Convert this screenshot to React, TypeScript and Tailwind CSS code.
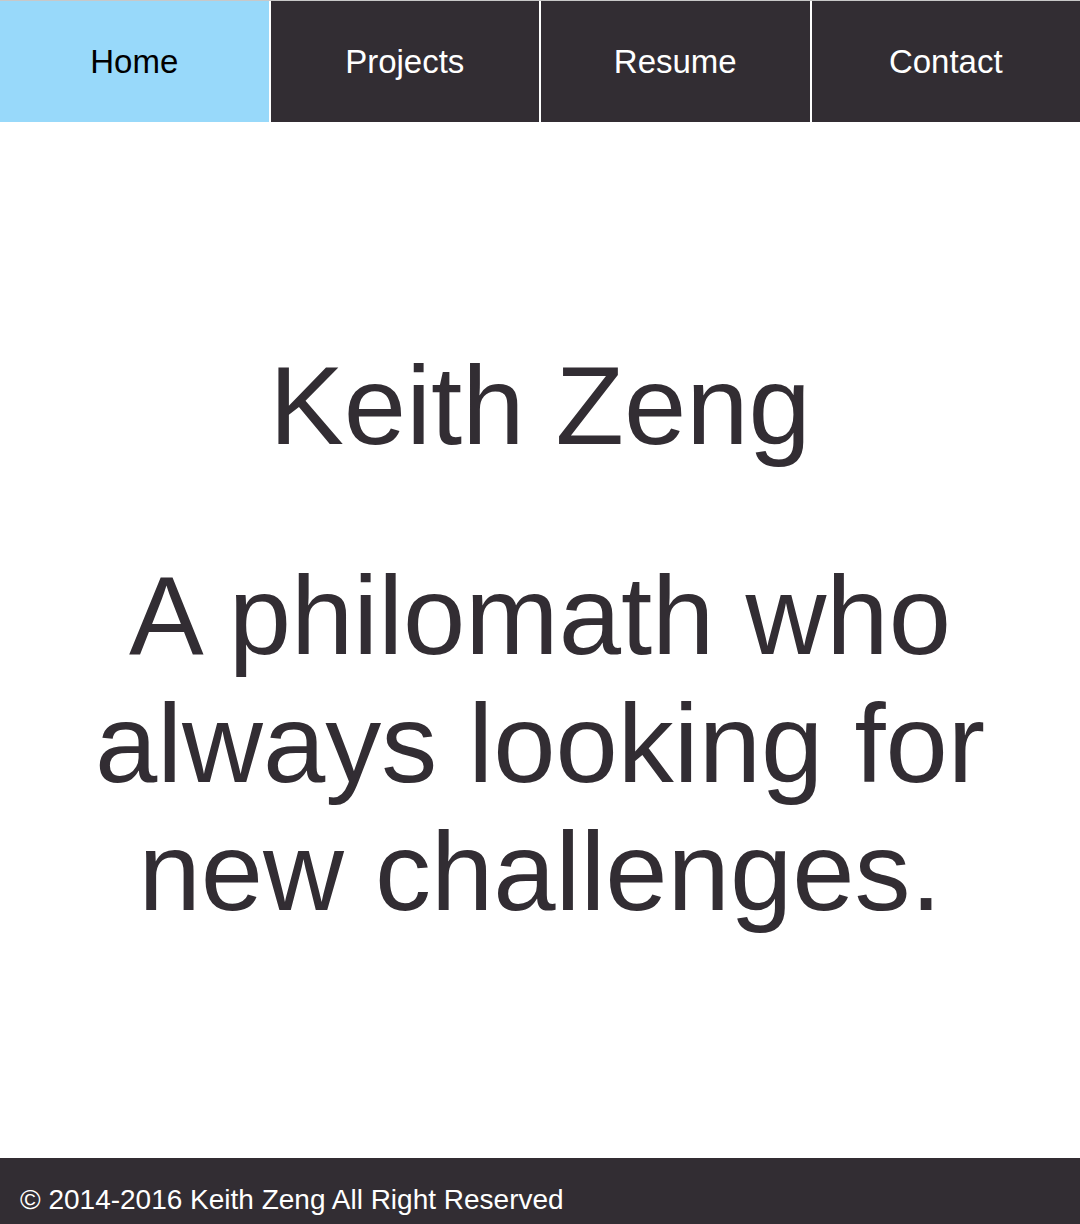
import React from 'react';

const links = ['Home', 'Projects', 'Resume', 'Contact'];

export default function App() {
  return (
    <div className="min-h-screen bg-white font-['Liberation_Sans',Arial,sans-serif] text-[#322d33]">
      <nav className="grid grid-cols-4 gap-[2px] border-t border-[#c8c8c8] bg-white">
        {links.map((l, i) => (
          <a
            key={l}
            href="#"
            className={`flex h-[121px] items-center justify-center text-[33px] leading-none ${
              i === 0 ? 'bg-[#98d9fa] text-black' : 'bg-[#322d33] text-white'
            }`}
          >
            {l}
          </a>
        ))}
      </nav>

      <main className="px-4 pt-[220px] text-center">
        <h1 className="text-[112px] font-normal leading-[128px]">Keith Zeng</h1>
        <p className="mt-[82px] text-[112px] leading-[128px]">
          A philomath who always looking for new challenges.
        </p>
      </main>

      <footer className="mt-[222px] bg-[#322d33] px-5 py-[26px] text-[28px] leading-[32px] text-white">
        © 2014-2016 Keith Zeng All Right Reserved
      </footer>
    </div>
  );
}
